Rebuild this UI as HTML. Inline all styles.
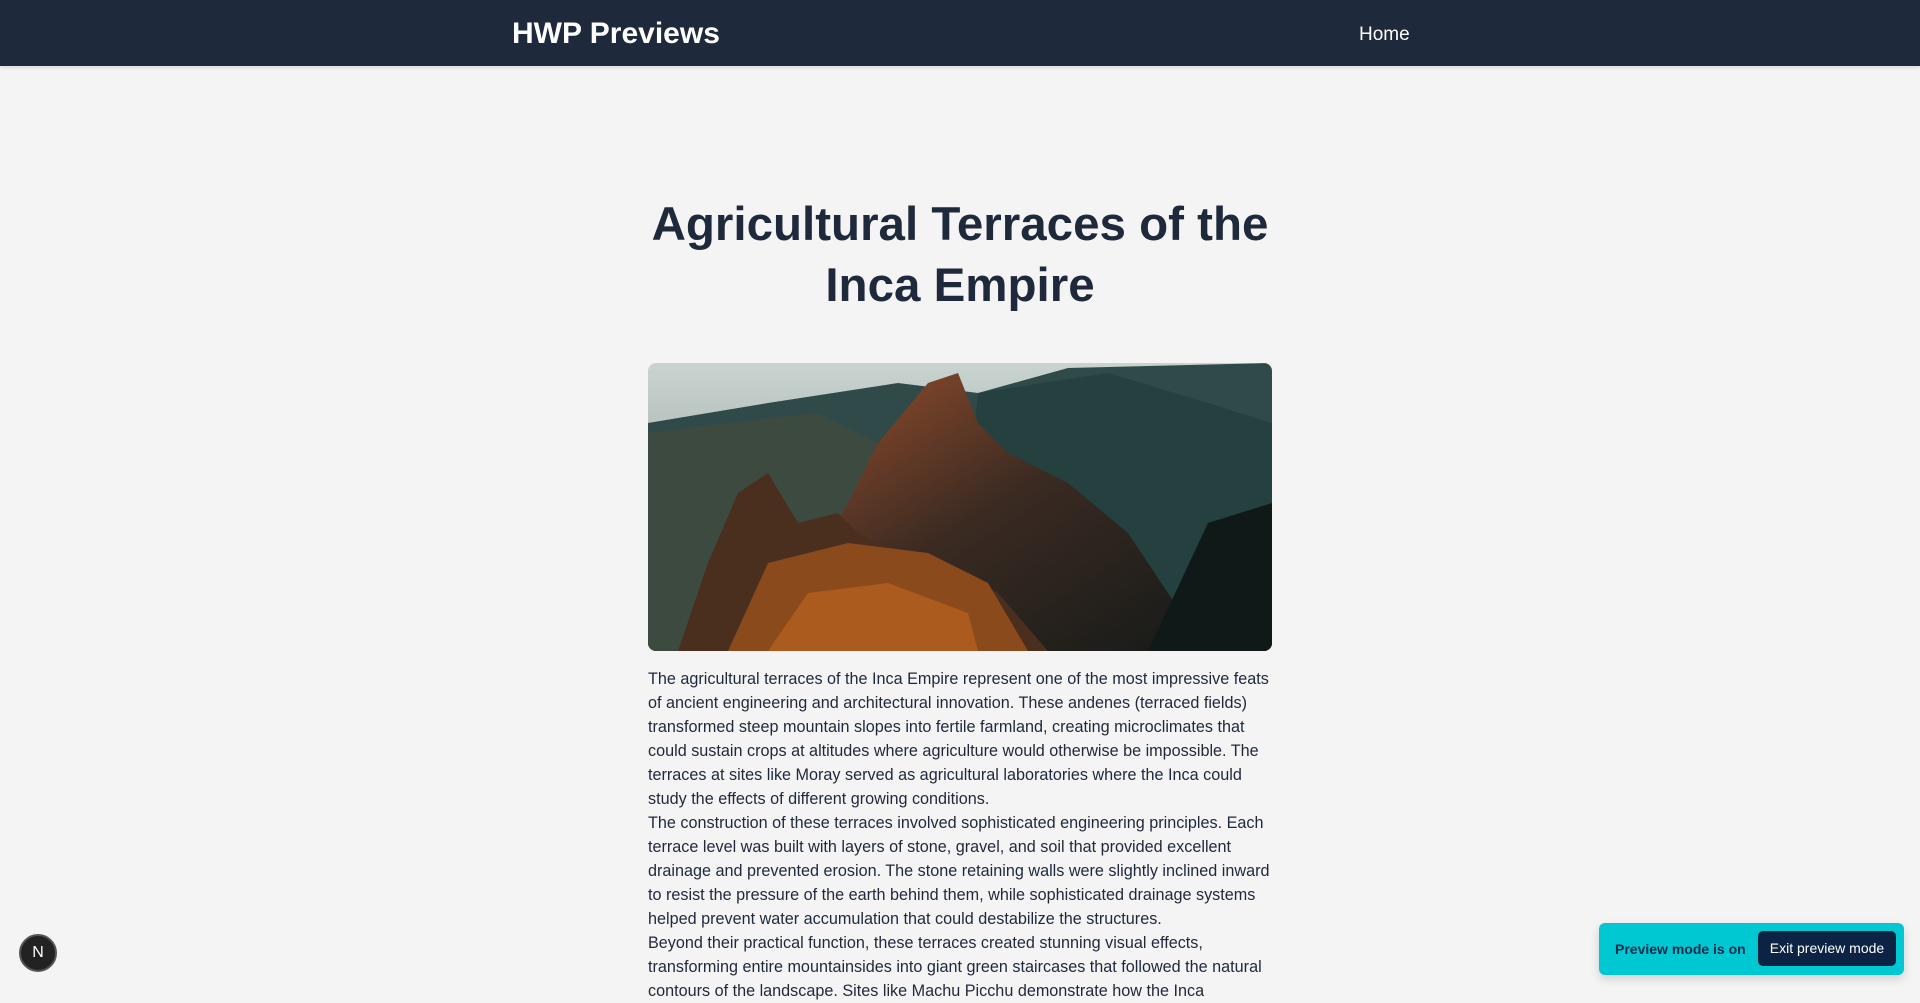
<!DOCTYPE html>
<html><head><meta charset="utf-8"><style>
*{margin:0;padding:0;box-sizing:border-box}
body{width:1920px;height:990px;overflow:hidden;background:#f4f4f4;font-family:"Liberation Sans",Arial,sans-serif;position:relative}
header{height:66px;background:#1e293b;position:relative;box-shadow:0 2px 4px rgba(0,0,0,.1)}
.brand{position:absolute;left:512px;top:17px;color:#fff;font-weight:bold;font-size:30px}
.home{position:absolute;left:1359px;top:24px;color:#fff;font-size:19px}
h1{position:absolute;left:600px;width:720px;top:194px;text-align:center;font-size:47.5px;line-height:61px;color:#1e293b;font-weight:bold}
.img{position:absolute;left:648px;top:363px;width:624px;height:288px;border-radius:8px;overflow:hidden}
.txt{position:absolute;left:648px;top:667px;width:700px;white-space:nowrap;font-size:16.2px;line-height:24px;color:#1e293b}
.pv{position:absolute;left:1599px;top:923px;width:305px;height:52px;background:#00c8d2;border-radius:6px;box-shadow:0 4px 10px rgba(0,0,0,.15)}
.pv span{position:absolute;left:16px;top:18px;font-weight:bold;font-size:14px;color:#0f2a4a}
.pv b{position:absolute;left:159px;top:8px;width:138px;height:35px;background:#0d2344;color:#fff;font-weight:normal;font-size:14px;border-radius:5px;text-align:center;line-height:35px}
.n{position:absolute;left:19px;top:934px;width:38px;height:38px;border-radius:50%;background:#222;border:2px solid #555;color:#fff;text-align:center;line-height:34px;font-size:16px}
</style></head><body>
<header><div class="brand">HWP Previews</div><div class="home">Home</div></header>
<h1>Agricultural Terraces of the<br>Inca Empire</h1>
<div class="img"><svg width="624" height="288" viewBox="0 0 624 288">
<defs><linearGradient id="sky" x1="0" y1="0" x2="0" y2="1"><stop offset="0" stop-color="#c9d3d0"/><stop offset="1" stop-color="#7f8f8c"/></linearGradient>
<linearGradient id="m" x1="0" y1="0" x2="1" y2="1"><stop offset="0" stop-color="#a0522d"/><stop offset=".5" stop-color="#3a2a22"/><stop offset="1" stop-color="#161a18"/></linearGradient></defs>
<rect width="624" height="288" fill="url(#sky)"/>
<polygon points="0,60 120,40 250,20 330,30 420,5 624,0 624,288 0,288" fill="#2f4a48"/>
<polygon points="330,30 460,10 560,40 624,60 624,288 300,288" fill="#24403f"/>
<polygon points="0,70 80,60 170,50 230,80 300,120 300,288 0,288" fill="#3d4a40"/>
<polygon points="200,140 230,80 280,20 310,10 330,60 360,90 420,120 480,170 520,230 560,288 120,288" fill="url(#m)"/>
<polygon points="60,200 90,130 120,110 150,160 190,150 210,170 230,180 260,190 300,200 350,230 400,288 30,288" fill="#4a2e1e"/>
<polygon points="80,288 120,200 200,180 280,190 340,220 380,288" fill="#8a4a1c"/>
<polygon points="120,288 160,230 240,220 320,250 330,288" fill="#b8621e" opacity=".7"/>
<polygon points="500,288 560,160 624,140 624,288" fill="#0f1a18"/>
</svg></div>
<div class="txt">The agricultural terraces of the Inca Empire represent one of the most impressive feats<br>of ancient engineering and architectural innovation. These andenes (terraced fields)<br>transformed steep mountain slopes into fertile farmland, creating microclimates that<br>could sustain crops at altitudes where agriculture would otherwise be impossible. The<br>terraces at sites like Moray served as agricultural laboratories where the Inca could<br>study the effects of different growing conditions.<br>The construction of these terraces involved sophisticated engineering principles. Each<br>terrace level was built with layers of stone, gravel, and soil that provided excellent<br>drainage and prevented erosion. The stone retaining walls were slightly inclined inward<br>to resist the pressure of the earth behind them, while sophisticated drainage systems<br>helped prevent water accumulation that could destabilize the structures.<br>Beyond their practical function, these terraces created stunning visual effects,<br>transforming entire mountainsides into giant green staircases that followed the natural<br>contours of the landscape. Sites like Machu Picchu demonstrate how the Inca</div>
<div class="n">N</div>
<div class="pv"><span>Preview mode is on</span><b>Exit preview mode</b></div>
</body></html>
